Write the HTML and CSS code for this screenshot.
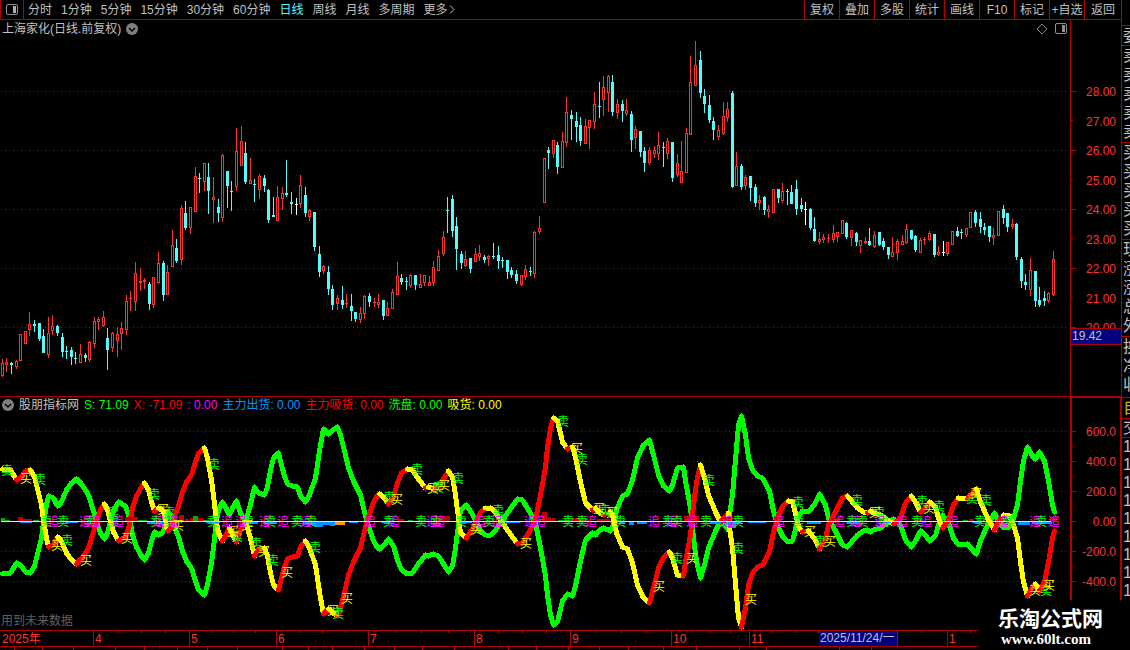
FILE: index.html
```html
<!DOCTYPE html>
<html lang="zh-CN">
<head>
    <meta charset="UTF-8">
    <meta name="viewport" content="width=device-width, initial-scale=1.0">
    <title>上海家化 日线</title>
    <link rel="stylesheet" href="styles.css">
</head>
<body>
    <div class="screen">
        <main class="main">
            <!-- 顶部工具栏 -->
            <nav class="toolbar">
                <button class="layout-btn" aria-label="布局">
                    <svg width="12" height="12" viewBox="0 0 12 12"><rect x="0.5" y="0.5" width="11" height="10" rx="1.5" fill="none" stroke="#909090"/><rect x="7" y="2" width="3" height="7" fill="#b0b0b0"/></svg>
                </button>
                <div class="periods">
                    <button>分时</button>
                    <button>1分钟</button>
                    <button>5分钟</button>
                    <button>15分钟</button>
                    <button>30分钟</button>
                    <button>60分钟</button>
                    <button class="active">日线</button>
                    <button>周线</button>
                    <button>月线</button>
                    <button>多周期</button>
                    <button>更多<svg width="7" height="9" viewBox="0 0 7 9"><path d="M2 0.5L6 4.5L2 8.5" fill="none" stroke="#c0c0c0"/></svg></button>
                </div>
                <div class="tools">
                    <button>复权</button>
                    <button>叠加</button>
                    <button>多股</button>
                    <button>统计</button>
                    <button>画线</button>
                    <button>F10</button>
                    <button>标记</button>
                    <button>+自选</button>
                    <button>返回</button>
                </div>
            </nav>

            <!-- K线图 -->
            <section class="panel">
                <svg id="priceChart" class="chart" viewBox="0 20 1121 376"></svg>
                <header class="panel-head">
                    <h1>上海家化(日线.前复权)</h1>
                    <button class="round" aria-label="展开"><svg width="12" height="12" viewBox="0 0 12 12"><circle cx="6" cy="6" r="6" fill="#808080"/><path d="M3 5L6 8L9 5" fill="none" stroke="#000" stroke-width="1.5"/></svg></button>
                    <div class="head-icons">
                        <svg width="12" height="12" viewBox="0 0 12 12"><path d="M6 1L11 6L6 11L1 6Z" fill="none" stroke="#808080"/></svg>
                        <svg width="12" height="12" viewBox="0 0 12 12"><rect x="0.5" y="0.5" width="11" height="10" rx="1.5" fill="none" stroke="#909090"/><rect x="7" y="2" width="3" height="7" fill="#909090"/></svg>
                    </div>
                </header>
            </section>

            <!-- 指标图 -->
            <section class="panel">
                <svg id="indicatorChart" class="chart" viewBox="0 396 1121 234"></svg>
                <header class="panel-head legend">
                    <button class="round" aria-label="展开"><svg width="12" height="12" viewBox="0 0 12 12"><circle cx="6" cy="6" r="6" fill="#808080"/><path d="M3 5L6 8L9 5" fill="none" stroke="#000" stroke-width="1.5"/></svg></button>
                    <span>股朋指标网</span>
                    <span class="green">S: 71.09</span>
                    <span class="red">X: -71.09</span>
                    <span class="magenta">: 0.00</span>
                    <span class="blue">主力出货: 0.00</span>
                    <span class="red">主力吸货: 0.00</span>
                    <span class="green">洗盘: 0.00</span>
                    <span class="yellow">吸货: 0.00</span>
                </header>
                <p class="note">用到未来数据</p>
            </section>

            <svg id="timeline" class="chart" viewBox="0 630 1121 20"></svg>
        </main>

        <!-- 右侧盘口 -->
        <aside class="quote">
            <ul class="q-top"><li>委</li></ul>
            <ul class="q-five"><li>卖</li><li>卖</li><li>卖</li><li>卖</li><li>卖</li></ul>
            <ul class="q-five"><li>买</li><li>买</li><li>买</li><li>买</li><li>买</li></ul>
            <ul class="q-five"><li>现</li><li>涨</li><li>涨</li><li>总</li><li>外</li></ul>
            <ul class="q-three"><li>换</li><li>净</li><li>收</li></ul>
            <ul class="q-self"><li>自</li></ul>
            <ul class="q-deal"><li>交</li></ul>
            <ul class="q-list"><li>1</li><li>1</li><li>1</li><li>1</li><li>1</li><li>1</li><li>1</li><li>1</li><li>1</li></ul>
        </aside>

        <div class="brand">
            <strong>乐淘公式网</strong>
            <a href="#">www.60lt.com</a>
        </div>
    </div>
    <script src="chart.js"></script>
</body>
</html>
```
FILE: styles.css
```css
:root {
    --line: #b00000;
    --text: #c0c0c0;
    --axis: #ff3232;
    --cyan: #54fcfc;
}

* {
    box-sizing: border-box;
}

body {
    margin: 0;
    background: #000;
    color: var(--text);
    font-family: "Liberation Sans", "Noto Sans CJK SC", sans-serif;
    font-size: 12px;
    line-height: 18px;
}

button {
    padding: 0;
    border: 0;
    background: none;
    color: inherit;
    font: inherit;
    white-space: nowrap;
    cursor: pointer;
}

.screen {
    position: relative;
    display: grid;
    grid-template-columns: 1fr 9px;
    height: 100vh;
    overflow: hidden;
}

.main {
    min-width: 0;
}

/* 工具栏 */
.toolbar {
    display: flex;
    height: 20px;
    border-bottom: 1px solid var(--line);
}

.layout-btn {
    display: flex;
    align-items: center;
    justify-content: center;
    width: 24px;
    border: solid var(--line);
    border-width: 0 1px;
}

.periods {
    display: flex;
    gap: 9px;
    padding-left: 4px;
}

.periods .active {
    color: var(--cyan);
}

.tools {
    display: flex;
    margin-left: auto;
}

.tools button {
    width: 35px;
    border-left: 1px solid var(--line);
}

.tools button:last-child {
    width: 37px;
}

/* 图表面板 */
.panel {
    position: relative;
    display: grid;
}

.chart {
    display: block;
    width: 100%;
    grid-area: 1 / 1;
}

.chart text {
    font-size: 12px;
}

.panel-head {
    grid-area: 1 / 1;
    align-self: start;
    display: flex;
    align-items: center;
    gap: 5px;
    padding: 0 54px 0 2px;
    white-space: nowrap;
}

.panel-head h1 {
    margin: 0;
    font-size: 12px;
    font-weight: normal;
}

.round {
    display: flex;
}

.head-icons {
    display: flex;
    gap: 7px;
    margin-left: auto;
}

.note {
    position: absolute;
    left: 1px;
    bottom: 0;
    margin: 0;
    color: #606060;
}

.green { color: #00ff00; }
.red { color: #ff0000; }
.magenta { color: #ff00ff; }
.blue { color: #0099ff; }
.yellow { color: #ffff00; }

/* 右侧盘口 */
.quote {
    overflow: hidden;
    border-left: 1px solid var(--line);
    font-size: 16px;
    line-height: 19px;
}

.quote ul {
    margin: 0;
    padding: 0 0 0 1px;
    border-bottom: 1px solid var(--line);
    list-style: none;
}

.quote li {
    width: 16px;
}

.quote .q-top {
    margin-top: 25px;
    border-top: 1px solid var(--line);
}

.quote .q-five {
    padding-bottom: 1px;
}

.quote .q-three {
    padding-bottom: 3px;
}

.quote .q-self {
    color: #c0c000;
    padding-bottom: 1px;
}

.quote .q-deal {
    line-height: 18px;
}

.quote .q-list {
    border: 0;
    line-height: 18px;
}

/* 水印 */
.brand {
    position: absolute;
    right: 0;
    bottom: 0;
    display: flex;
    flex-direction: column;
    width: 152px;
    height: 50px;
    padding: 8px 0 0 20px;
    background: #000;
    color: #fff;
    line-height: 22px;
}

.brand strong {
    font-size: 21px;
}

.brand a {
    padding-left: 3px;
    color: #fff;
    font: bold 15px/18px "Liberation Serif", serif;
    text-decoration: none;
}
```
FILE: chart.js
```js
const NS = 'http://www.w3.org/2000/svg';
const LINE = '#b00000';
const UP = '#ff3232';
const DOWN = '#54fcfc';
const RIGHT = 1070;

function add(parent, name, attrs, text) {
    const el = document.createElementNS(NS, name);
    for (const key in attrs) el.setAttribute(key, attrs[key]);
    if (text) el.textContent = text;
    parent.appendChild(el);
    return el;
}

function rect(svg, x, y, w, h, fill) {
    add(svg, 'rect', { x: x, y: y, width: w, height: h, fill: fill, 'shape-rendering': 'crispEdges' });
}

function grid(svg, rows) {
    rows.forEach(y => add(svg, 'line', {
        x1: 1, x2: RIGHT - 3, y1: y + 0.5, y2: y + 0.5, stroke: LINE,
        'stroke-dasharray': '1 3', 'shape-rendering': 'crispEdges'
    }));
}

// 每根K线: 类型 最高 实体上沿 实体下沿 最低 (u 阳线, d 阴线, w 平盘)
const candles = `
u 359 363 375 376,u 358 362 364 371,d 362 363 364 373,u 360 361 366 368,u 334 334 360 360,u 331 331 343 343,u 312 324 329 335,
d 320 324 325 331,d 323 323 338 340,d 329 336 352 352,u 317 333 354 357,u 315 326 330 334,d 325 326 332 335,d 333 337 351 356,
d 346 351 351 358,d 347 350 356 364,d 352 358 358 363,u 344 354 362 362,d 353 355 357 361,u 341 342 359 361,u 317 321 343 347,
u 317 319 321 329,u 311 317 325 326,d 328 338 349 369,u 332 333 347 351,u 327 334 340 356,u 322 328 333 349,u 295 301 329 334,
u 291 298 298 310,u 262 273 301 310,u 268 281 282 290,u 278 280 281 288,d 282 284 303 309,u 277 277 304 307,u 252 263 282 283,
d 261 263 294 300,u 265 272 294 294,u 230 245 266 266,d 239 248 260 262,u 205 208 259 264,d 201 213 227 229,u 207 207 227 233,
u 167 176 211 211,d 173 178 178 192,u 163 163 181 190,d 163 177 190 213,u 177 197 199 222,d 199 207 212 221,u 154 155 217 221,
d 171 171 185 207,d 181 191 191 210,u 128 151 186 190,u 126 141 165 165,d 142 153 181 183,u 158 180 183 183,d 179 184 184 201,
u 174 176 189 198,d 175 178 185 191,d 189 190 219 222,d 197 215 216 216,u 186 197 220 220,u 187 193 198 209,d 160 193 194 196,
d 192 202 203 213,w 198 204 204 214,u 175 185 203 207,d 187 195 212 216,u 209 210 216 220,d 212 212 246 250,d 246 254 271 276,
u 265 266 270 273,d 266 272 288 294,d 285 289 304 309,u 295 298 303 309,d 286 300 304 308,u 294 303 303 307,d 294 306 310 320,
d 312 312 318 321,u 307 313 319 322,u 295 296 313 318,d 293 296 301 306,u 298 302 302 306,u 294 302 304 307,d 300 300 315 319,
u 302 308 315 315,u 289 292 308 308,u 262 276 294 294,d 274 278 281 284,d 277 281 281 289,u 274 275 285 287,d 275 275 284 289,
u 274 284 287 287,u 275 275 282 285,u 276 282 285 285,u 261 267 282 285,u 250 256 270 270,u 231 237 253 255,d 197 210 210 232,
d 195 199 230 236,d 217 226 248 269,d 251 254 262 268,u 251 259 265 266,d 258 258 268 272,u 248 254 261 261,u 245 253 256 260,
d 255 257 259 262,u 255 256 258 265,d 243 256 256 258,d 246 255 260 268,d 257 260 260 267,d 260 260 271 278,d 267 270 274 277,
d 270 274 280 283,u 275 275 284 285,u 265 269 276 279,d 267 271 271 275,u 231 232 273 277,u 216 228 231 233,u 158 158 202 202,
d 147 150 152 168,u 140 140 153 157,d 142 145 166 173,u 132 141 167 167,u 97 112 142 146,d 110 115 118 139,d 112 121 126 141,
d 117 125 140 145,u 119 126 143 143,u 120 120 127 148,u 92 104 121 128,d 82 106 106 117,u 76 87 99 115,u 75 76 92 111,
d 75 82 111 115,u 99 104 112 118,d 100 104 110 121,u 99 110 113 115,d 111 114 139 151,u 126 129 137 148,d 131 131 151 156,
d 147 151 162 171,u 147 150 162 164,u 146 150 153 157,u 132 145 153 159,d 142 147 147 166,u 138 141 153 158,d 142 142 177 181,
u 154 163 174 176,u 141 171 182 182,u 128 133 172 172,u 56 82 134 134,u 41 65 85 85,d 51 60 92 97,d 89 96 103 112,
d 95 105 119 122,d 117 121 129 139,u 125 130 136 139,u 102 116 133 134,u 102 109 117 121,d 91 93 186 187,u 152 166 185 185,
d 164 166 186 189,u 175 177 185 189,d 176 176 187 200,d 184 187 202 206,u 195 200 202 209,d 196 197 209 214,u 205 209 211 217,
u 189 189 212 212,d 189 189 197 202,u 183 191 200 202,d 189 191 191 204,d 185 192 203 203,d 180 189 208 214,d 198 205 208 211,
w 202 209 209 224,d 208 209 227 229,d 217 229 240 241,u 232 239 241 243,u 234 237 239 242,u 234 238 238 242,u 225 233 239 242,
u 232 232 236 241,u 220 220 233 233,d 222 223 236 238,u 230 230 237 245,d 232 233 241 245,u 240 240 245 252,u 237 241 242 243,
d 228 241 244 245,u 231 235 246 247,d 232 232 244 245,d 238 241 246 249,d 247 247 254 258,u 237 252 256 256,u 239 241 252 259,
u 235 241 244 244,u 224 229 242 243,d 230 230 238 239,d 235 236 249 251,u 238 240 252 252,u 237 239 239 244,u 231 233 239 240,
d 234 234 254 256,u 246 252 254 255,w 241 252 252 255,u 242 242 253 255,u 231 231 244 244,d 227 231 235 236,d 229 232 232 238,
u 228 228 234 236,u 212 212 227 227,d 210 212 222 226,d 212 219 226 232,d 223 227 229 234,d 226 226 236 241,u 228 235 237 244,
u 211 211 235 235,d 205 209 217 223,d 213 213 226 231,u 219 224 226 228,d 223 224 256 259,d 257 259 280 287,d 274 282 284 289,
u 258 270 289 295,d 271 271 300 306,d 287 300 304 306,d 291 298 300 305,u 292 293 300 302,u 251 259 294 295`;

function drawPrice() {
    const svg = document.getElementById('priceChart');
    grid(svg, [91, 150, 209, 268, 327]);

    candles.trim().split(/,\s*/).forEach((row, i) => {
        const [type, ...v] = row.split(' ');
        const [high, top, bottom, low] = v.map(Number);
        const x = Math.floor(2.38 + i * 4.59);
        const color = { u: UP, d: DOWN, w: '#ffffff' }[type];
        rect(svg, x, high, 1, low - high + 1, color);
        rect(svg, x - 1, top, 3, bottom - top + 1, color);
        if (type === 'u' && bottom - top > 1) {
            rect(svg, x, top + 1, 1, bottom - top - 1, '#000');
        }
    });

    // 价格坐标
    rect(svg, RIGHT, 20, 1, 376, LINE);
    for (let p = 28; p >= 20; p--) {
        const y = Math.floor(91 + (28 - p) * 29.5);
        rect(svg, RIGHT, y, p % 2 ? 3 : 6, 1, LINE);
        add(svg, 'text', { x: 1116, y: y + (p % 2 ? 6 : 5), fill: UP, 'text-anchor': 'end' }, p + '.00');
    }
    rect(svg, RIGHT, 328, 51, 17, LINE);
    rect(svg, RIGHT + 1, 329, 50, 15, '#000080');
    add(svg, 'text', { x: 1072, y: 340, fill: '#c0c0c0' }, '19.42');
}

// X 曲线的拐点, S 曲线与它以零轴对称
const curve = `
2 469 10 470 16 480 20 478 25 471 30 470 34 477 37 489 41 505 43 521 46 538 48 547 53 545 57 537 61 541 66 553 71 560 76 564
81 559 88 548 93 532 97 518 100 510 104 504 107 510 110 521 113 532 118 541 125 537 129 525 132 508 136 496 141 487 144 483
148 490 151 502 154 511 158 508 163 511 165 521 167 531 171 528 174 516 178 506 182 492 186 482 191 475 194 465 198 453
204 448 207 458 208 464 211 480 214 504 216 522 218 533 222 541 226 534 229 528 232 535 236 542 240 530 245 522 250 538
254 556 258 550 264 548 267 556 270 573 273 585 278 590 281 578 284 567 287 559 292 557 297 556 300 547 305 541 309 548
315 565 319 592 323 614 328 609 334 614 337 616 340 608 345 588 348 575 353 562 360 548 363 535 367 520 372 505 375 498
379 494 383 497 388 504 393 497 397 483 401 473 407 469 412 470 418 479 425 488 428 487 433 489 438 487 443 479 448 471
452 477 455 495 458 518 460 533 466 538 470 532 475 523 480 512 485 508 490 508 493 510 500 520 507 530 517 544 522 543
528 533 535 520 540 495 545 467 547 448 550 428 553 418 557 421 562 442 567 449 572 447 575 457 580 482 585 503 592 510
595 508 598 512 603 515 610 512 613 518 616 533 622 547 627 549 632 563 637 585 643 598 649 603 653 588 658 568 663 557
669 552 672 558 677 575 683 576 685 562 690 535 693 505 696 482 700 465 704 478 708 495 715 512 720 522 723 519 728 513
729 528 732 548 734 572 736 595 738 618 741 627 745 608 748 585 752 573 757 567 762 565 769 552 773 532 778 515 783 505
788 501 792 502 795 513 798 527 802 532 808 531 815 540 819 549 825 538 828 525 835 512 842 498 847 496 852 502 857 508
863 512 867 513 870 511 873 513 880 515 887 520 893 524 900 518 905 503 911 496 915 502 920 512 925 508 929 502 935 507
938 518 942 528 948 520 953 505 958 498 967 499 973 492 976 489 980 502 987 518 994 530 998 522 1003 515 1009 516 1013 525
1017 538 1020 562 1023 582 1027 596 1032 587 1035 584 1039 591 1044 582 1048 562 1052 538 1054 531`;

// 零轴附近的柱: x 宽 高 (正值向上)
const bars = {
    '#c00000': '18 5 4,23 9 2,125 8 4,133 5 4,179 5 6,185 4 2,190 3 3,198 5 3,398 6 2,440 10 5,537 4 2,542 5 9,547 4 4,552 4 3,572 14 3,597 13 2,684 15 5,723 8 4,774 8 4,832 8 3,916 6 2,969 5 2,998 8 4,1050 7 4',
    '#00b000': '1 4 3,5 5 1,33 6 1,138 9 1,193 5 5,203 6 1,408 5 1,558 12 1,963 5 1',
    '#0090ff': '20 12 -1,65 13 -1,147 17 -2,206 14 -1,243 15 -2,263 14 -2,303 12 -3,315 8 -5,322 9 -3,330 5 -4,349 9 -1,381 9 -1,460 12 -1,506 14 -1,619 6 -2,629 5 -3,637 10 -2,710 11 -2,728 8 -6,736 6 -2,748 18 -1,807 14 -2,846 14 -1,883 8 -1,972 10 -1,1018 12 -3,1032 20 -2',
    '#ff9900': '335 10 -3'
};

// 文字标记的中心坐标
const marks = [
    ['卖', '#00ff00', `7 470 40 479 67 540 154 494 214 464 256 543 273 560 237 536 169 512 46 521 63 521 90 521 113 521 156 521 213 521
        248 521 270 521 315 547 338 613 389 497 417 469 438 487 458 478 498 510 563 421 297 521 311 521 389 521 421 521 436 521
        461 521 489 521 502 521 113 512 169 521 582 459 605 510 677 558 709 480 738 548 798 502 820 541 568 521 582 521 620 521
        668 521 677 521 706 521 738 521 798 521 857 500 879 512 922 501 939 506 972 498 986 500 1046 590 852 521 862 521 883 521
        917 521 980 521 1011 521 1006 521 1041 521`],
    ['买', '#ffff00', `26 478 57 545 86 560 127 538 163 509 178 525 233 531 247 525 264 551 287 572 333 610 347 598 397 499 433 488
        444 485 476 529 526 543 577 448 599 508 612 512 692 558 659 586 751 599 810 531 830 541 875 512 929 508 976 493 1035 590 1049 585`],
    ['追', '#ff00ff', `53 521 85 521 95 521 118 521 159 521 173 521 227 521 241 521 265 521 283 521 306 521 370 521 394 521 432 521 439 521
        480 521 497 521 530 521 540 521 591 521 654 521 672 521 692 521 728 521 779 521 839 521 856 521 880 521 902 521 926 521
        953 521 1003 521 1035 521 1054 521`]
];

function drawIndicator() {
    const svg = document.getElementById('indicatorChart');
    grid(svg, [431, 461, 491, 551, 581]);

    const nums = curve.trim().split(/\s+/).map(Number);
    const pts = [];
    for (let i = 0; i < nums.length; i += 2) pts.push([nums[i] + 0.5, nums[i + 1]]);

    const style = { fill: 'none', 'stroke-width': 5, 'stroke-linejoin': 'round', 'stroke-linecap': 'round', 'shape-rendering': 'crispEdges' };
    add(svg, 'polyline', { ...style, stroke: '#00ff00', points: pts.map(p => p[0] + ',' + (1043 - p[1])).join(' ') });
    for (let i = 1; i < pts.length; i++) {
        const [a, b] = [pts[i - 1], pts[i]];
        add(svg, 'path', { ...style, stroke: b[1] < a[1] ? '#ff0000' : '#ffff00', d: `M${a}L${b}` });
    }

    for (const color in bars) {
        bars[color].split(',').forEach(item => {
            const [x, w, h] = item.split(' ').map(Number);
            rect(svg, x, h > 0 ? 521 - h : 522, w, Math.abs(h), color);
        });
    }
    marks.forEach(([char, color, list]) => {
        const pos = list.trim().split(/\s+/).map(Number);
        for (let i = 0; i < pos.length; i += 2) {
            add(svg, 'text', { x: pos[i], y: pos[i + 1] + 5, fill: color, 'text-anchor': 'middle' }, char);
        }
    });
    rect(svg, 1, 521, 1050, 1, '#ffff00');

    // 面板边框和坐标
    rect(svg, 0, 396, 1121, 1, LINE);
    rect(svg, RIGHT, 396, 51, 2, LINE);
    rect(svg, RIGHT, 396, 2, 234, LINE);
    rect(svg, 1120, 396, 1, 234, LINE);
    ['600.0', '400.0', '200.0', '0.00', '-200.0', '-400.0'].forEach((label, i) => {
        const y = 431 + i * 30;
        rect(svg, RIGHT, y, 6, 1, LINE);
        if (i < 5) rect(svg, RIGHT, y + 15, 3, 1, LINE);
        add(svg, 'text', { x: 1116, y: y + 5, fill: UP, 'text-anchor': 'end' }, label);
    });
}

function drawTimeline() {
    const svg = document.getElementById('timeline');
    rect(svg, 0, 630, 1121, 1, LINE);
    rect(svg, 0, 646, 1121, 1, LINE);
    [[-2, '2025年'], [93, '4'], [189, '5'], [276, '6'], [368, '7'], [474, '8'], [570, '9'], [671, '10'], [749, '11'], [947, '1']].forEach(([x, label]) => {
        rect(svg, x, 630, 1, 16, LINE);
        add(svg, 'text', { x: x + 2 + (x < 0 ? 2 : 0), y: 643, fill: UP }, label);
    });
    [118, 141, 165, 211, 233, 255, 299, 322, 345, 395, 421, 448, 498, 522, 546, 595, 621, 646, 691, 710, 730, 772, 795, 818, 921, 970].forEach(x => rect(svg, x, 631, 1, 2, LINE));
    [14, 42, 73, 115, 144, 177, 207, 237, 282, 308, 332, 364, 394, 422, 454, 508, 536, 568, 599, 628, 663, 696, 739, 766, 839, 871].forEach(x => rect(svg, x, 647, 1, 3, LINE));
    rect(svg, 819, 631, 79, 15, '#000080');
    rect(svg, 897, 631, 1, 15, LINE);
    add(svg, 'text', { x: 820, y: 642, fill: '#c0c0c0' }, '2025/11/24/一');
}

drawPrice();
drawIndicator();
drawTimeline();
```
